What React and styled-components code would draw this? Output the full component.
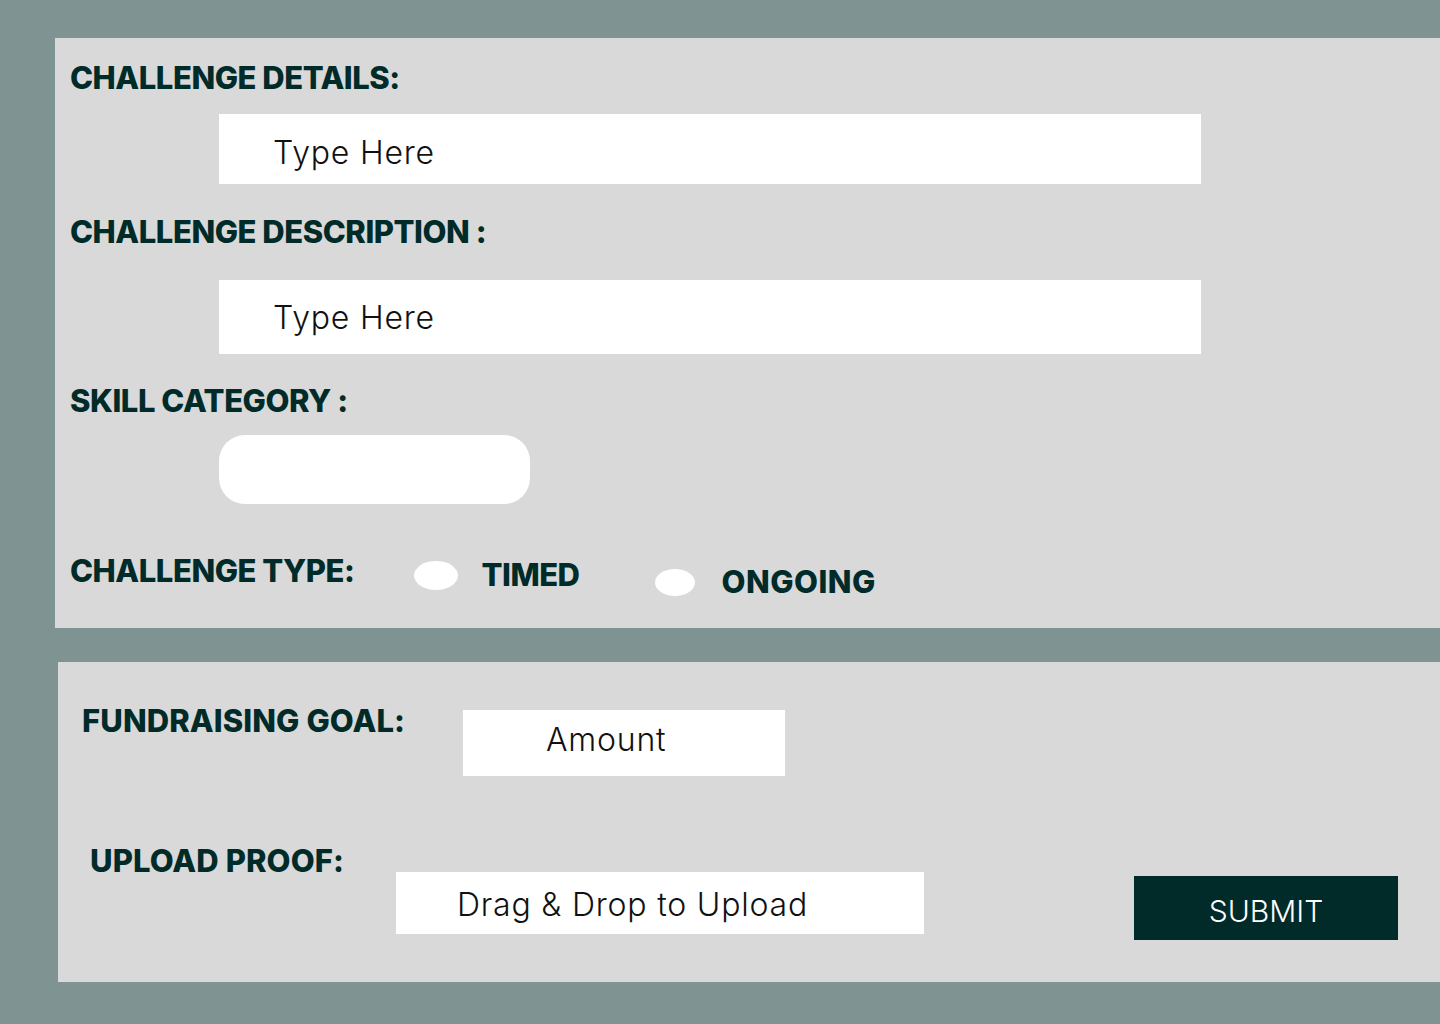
import styled, { createGlobalStyle } from "styled-components";

const GlobalStyle = createGlobalStyle`
  html, body {
    margin: 0;
    padding: 0;
    background: #7f9492;
  }
  body {
    font-family: "Inter", "Liberation Sans", sans-serif;
  }
  * {
    box-sizing: border-box;
  }
`;

const Page = styled.div`
  width: 1440px;
  height: 1024px;
  padding-top: 38px;
  overflow: hidden;
`;

const DetailsPanel = styled.section`
  margin-left: 55px;
  width: 1385px;
  height: 590px;
  background: #d9d9d9;
  padding: 24px 0 0 15px;
`;

const GoalPanel = styled.section`
  margin: 34px 0 0 58px;
  width: 1382px;
  height: 320px;
  background: #d9d9d9;
  padding-top: 43px;
`;

const Heading = styled.h2`
  flex: none;
  width: ${(p) => (p.$width ? `${p.$width}px` : "auto")};
  margin: ${(p) => p.$top || 0}px 0 0 ${(p) => p.$left || 0}px;
  font-size: ${(p) => p.$size || 31}px;
  line-height: 32px;
  font-weight: 800;
  color: #002b29;
  letter-spacing: ${(p) => p.$spacing ?? -0.45}px;
  white-space: nowrap;
`;

const TextBox = styled.input`
  display: block;
  flex: none;
  margin: ${(p) => p.$top || 0}px 0 0 ${(p) => p.$left || 0}px;
  width: ${(p) => p.$width}px;
  height: ${(p) => p.$height}px;
  padding: ${(p) => p.$drop || 0}px 0 ${(p) => p.$lift || 0}px ${(p) => p.$pad}px;
  border: none;
  border-radius: 0;
  background: #ffffff;
  font-family: "Inter", "Liberation Sans", sans-serif;
  font-size: 32px;
  font-weight: 300;
  letter-spacing: 0.8px;
  color: #111;
  outline: none;

  &::placeholder {
    color: #111;
    opacity: 1;
  }
`;

const CategoryPill = styled.div`
  margin: 18px 0 0 149px;
  width: 311px;
  height: 69px;
  border-radius: 26px;
  background: #ffffff;
`;

const TypeRow = styled.div`
  display: flex;
  align-items: flex-start;
  margin-top: 51px;
`;

const TypeOption = styled.label`
  display: flex;
  align-items: center;
  margin: ${(p) => p.$drop || 0}px 0 0 ${(p) => p.$left}px;
  cursor: pointer;
`;

const Radio = styled.span`
  display: block;
  width: ${(p) => p.$w}px;
  height: ${(p) => p.$h}px;
  border-radius: 50%;
  background: #ffffff;
`;

const OptionText = styled.span`
  margin-left: ${(p) => p.$gap}px;
  font-size: 31px;
  line-height: 32px;
  font-weight: 800;
  letter-spacing: ${(p) => p.$spacing ?? -0.5}px;
  color: #002b29;
`;

const GoalRow = styled.div`
  display: flex;
  align-items: flex-start;
  margin-top: ${(p) => p.$top || 0}px;
`;

const SubmitButton = styled.button`
  flex: none;
  margin: 31px 0 0 210px;
  width: 264px;
  height: 64px;
  border: none;
  background: #002b29;
  color: #ffffff;
  font-family: "Inter", "Liberation Sans", sans-serif;
  font-size: 30px;
  font-weight: 300;
  padding-top: 7px;
  cursor: pointer;
`;

const App = () => {
  return (
    <Page>
      <GlobalStyle />
      <DetailsPanel>
        <Heading>CHALLENGE DETAILS:</Heading>
        <TextBox $top={20} $left={149} $width={982} $height={70} $pad={54} $drop={6} placeholder="Type Here" />
        <Heading $top={32}>CHALLENGE DESCRIPTION :</Heading>
        <TextBox $top={32} $left={149} $width={982} $height={74} $pad={54} placeholder="Type Here" />
        <Heading $top={31}>SKILL CATEGORY :</Heading>
        <CategoryPill />
        <TypeRow>
          <Heading>CHALLENGE TYPE:</Heading>
          <TypeOption $left={59} $drop={4}>
            <Radio $w={44} $h={29} />
            <OptionText $gap={24}>TIMED</OptionText>
          </TypeOption>
          <TypeOption $left={76} $drop={11}>
            <Radio $w={40} $h={27} />
            <OptionText $gap={26} $spacing={0.5}>ONGOING</OptionText>
          </TypeOption>
        </TypeRow>
      </DetailsPanel>
      <GoalPanel>
        <GoalRow>
          <Heading $left={24} $width={381} $size={31} $spacing={0.1}>FUNDRAISING GOAL:</Heading>
          <TextBox $top={5} $width={322} $height={66} $pad={83} $lift={8} placeholder="Amount" />
        </GoalRow>
        <GoalRow $top={69}>
          <Heading $left={32} $width={306} $size={31} $spacing={0.1}>UPLOAD PROOF:</Heading>
          <TextBox $top={27} $width={528} $height={62} $pad={61} $drop={2} placeholder="Drag & Drop to Upload" />
          <SubmitButton>SUBMIT</SubmitButton>
        </GoalRow>
      </GoalPanel>
    </Page>
  );
};

export default App;
